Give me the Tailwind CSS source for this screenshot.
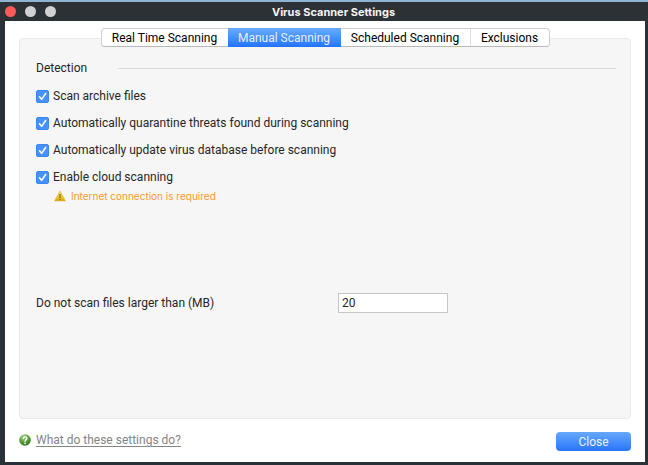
<!DOCTYPE html>
<html lang="en">
<head>
<meta charset="utf-8">
<meta name="viewport" content="width=device-width, initial-scale=1">
<title>Virus Scanner Settings</title>
<script src="https://cdn.jsdelivr.net/npm/@tailwindcss/browser@4"></script>
</head>
<body class="flex min-h-screen flex-col border-t-2 border-[#8fb3d0] bg-[#2b3237] font-['Roboto','Liberation_Sans',sans-serif] text-[12px] leading-4 text-[#262626]">
  <header class="flex h-[19px] shrink-0 items-center rounded-t bg-[#2c3136] pl-[5px]">
    <div class="flex flex-1 gap-[9px]">
      <button type="button" aria-label="Close window" class="size-[11px] rounded-full bg-[#fc5b57]"></button>
      <button type="button" aria-label="Minimize window" class="size-[11px] rounded-full bg-[#d0d1d2]"></button>
      <button type="button" aria-label="Zoom window" class="size-[11px] rounded-full bg-[#d0d1d2]"></button>
    </div>
    <h1 class="pl-[14px] font-['Inter','Liberation_Sans',sans-serif] text-[11px] font-bold text-[#f4f4f4]">Virus Scanner Settings</h1>
    <div class="flex-1"></div>
  </header>

  <main class="mr-[3px] mb-[3px] ml-[5px] flex flex-1 flex-col bg-white px-[14px] pt-[7px] pb-[11px]">
    <nav class="z-10 -mb-[9px] flex h-[19px] self-center rounded border border-[#cfcfcf] border-b-[#b9b9b9] bg-white text-black">
      <button type="button" class="w-[126px] rounded-l">Real Time Scanning</button>
      <button type="button" aria-current="page" class="-my-px w-[113px] bg-linear-to-b from-[#6aacfa] to-[#2173fc] text-[#e4f0ff]">Manual Scanning</button>
      <button type="button" class="w-[130px] border-r border-[#dedede]">Scheduled Scanning</button>
      <button type="button" class="w-[78px] rounded-r">Exclusions</button>
    </nav>

    <section class="flex-1 rounded-sm border border-[#e9e9e9] bg-[#f6f6f6] pt-[21px] pr-[14px] pb-4 pl-4">
      <div class="flex items-center">
        <h2 class="w-[82px]">Detection</h2>
        <div class="h-px flex-1 bg-[#dcdcdc]"></div>
      </div>

      <div class="mt-3 flex flex-col items-start gap-[11px]">
        <label class="flex items-center gap-1">
          <span class="grid size-[13px]">
            <input type="checkbox" checked class="peer col-start-1 row-start-1 size-[13px] appearance-none rounded-[2px] border border-[#b5b5b5] bg-white checked:border-[#3c86f2] checked:bg-[#4791f8]">
            <svg viewBox="0 0 12 12" class="pointer-events-none invisible col-start-1 row-start-1 size-[13px] peer-checked:visible" fill="none" stroke="#fff" stroke-width="1.4" stroke-linecap="round" stroke-linejoin="round"><path d="M3.2 6.3 5.2 8.6 8.9 3.2"/></svg>
          </span>
          Scan archive files
        </label>
        <label class="flex items-center gap-1">
          <span class="grid size-[13px]">
            <input type="checkbox" checked class="peer col-start-1 row-start-1 size-[13px] appearance-none rounded-[2px] border border-[#b5b5b5] bg-white checked:border-[#3c86f2] checked:bg-[#4791f8]">
            <svg viewBox="0 0 12 12" class="pointer-events-none invisible col-start-1 row-start-1 size-[13px] peer-checked:visible" fill="none" stroke="#fff" stroke-width="1.4" stroke-linecap="round" stroke-linejoin="round"><path d="M3.2 6.3 5.2 8.6 8.9 3.2"/></svg>
          </span>
          Automatically quarantine threats found during scanning
        </label>
        <label class="flex items-center gap-1">
          <span class="grid size-[13px]">
            <input type="checkbox" checked class="peer col-start-1 row-start-1 size-[13px] appearance-none rounded-[2px] border border-[#b5b5b5] bg-white checked:border-[#3c86f2] checked:bg-[#4791f8]">
            <svg viewBox="0 0 12 12" class="pointer-events-none invisible col-start-1 row-start-1 size-[13px] peer-checked:visible" fill="none" stroke="#fff" stroke-width="1.4" stroke-linecap="round" stroke-linejoin="round"><path d="M3.2 6.3 5.2 8.6 8.9 3.2"/></svg>
          </span>
          Automatically update virus database before scanning
        </label>
        <label class="flex items-center gap-1">
          <span class="grid size-[13px]">
            <input type="checkbox" checked class="peer col-start-1 row-start-1 size-[13px] appearance-none rounded-[2px] border border-[#b5b5b5] bg-white checked:border-[#3c86f2] checked:bg-[#4791f8]">
            <svg viewBox="0 0 12 12" class="pointer-events-none invisible col-start-1 row-start-1 size-[13px] peer-checked:visible" fill="none" stroke="#fff" stroke-width="1.4" stroke-linecap="round" stroke-linejoin="round"><path d="M3.2 6.3 5.2 8.6 8.9 3.2"/></svg>
          </span>
          Enable cloud scanning
        </label>
      </div>

      <p class="mt-[3px] flex items-center gap-[5px] pl-[18px] font-['Inter','Liberation_Sans',sans-serif] text-[10px] text-[#fb9a2e]">
        <svg viewBox="0 0 12 12" class="size-3" aria-hidden="true">
          <defs><linearGradient id="warn" x1="0" y1="0" x2="0" y2="1"><stop offset="0" stop-color="#f5e490"/><stop offset=".6" stop-color="#ecc52c"/><stop offset="1" stop-color="#d3a714"/></linearGradient></defs>
          <path d="M6 .8 11.5 11H.5Z" fill="url(#warn)" stroke="#dcb640" stroke-width=".6" stroke-linejoin="round"/>
          <path d="M6 4.4v3" stroke="#7a6420" stroke-width="1.1" stroke-linecap="round"/>
          <circle cx="6" cy="9.3" r=".65" fill="#7a6420"/>
        </svg>
        Internet connection is required
      </p>

      <div class="mt-[89px] flex items-center">
        <label for="max-size" class="w-[302px]">Do not scan files larger than (MB)</label>
        <input id="max-size" type="text" value="20" class="h-5 w-[110px] border border-[#c6c6c6] bg-white px-[3px]">
      </div>
    </section>

    <footer class="mt-[13px] flex items-start justify-between">
      <a href="#" class="flex items-center gap-[5px] text-[#858585]">
        <svg viewBox="0 0 12 12" class="size-3" aria-hidden="true">
          <defs><radialGradient id="help" cx=".4" cy=".25" r=".8"><stop offset="0" stop-color="#b5d79b"/><stop offset=".5" stop-color="#5aa337"/><stop offset="1" stop-color="#2c6f18"/></radialGradient></defs>
          <circle cx="6" cy="6" r="5.8" fill="url(#help)"/>
          <path d="M4.2 4.6C4.2 2.3 7.9 2.3 7.9 4.5 7.9 5.8 6.1 5.9 6.1 7.2" fill="none" stroke="#fff" stroke-width="1.4" stroke-linecap="round"/>
          <circle cx="6.1" cy="9.3" r=".9" fill="#fff"/>
        </svg>
        <span class="underline underline-offset-2">What do these settings do?</span>
      </a>
      <button type="button" class="h-[19px] w-[75px] rounded bg-linear-to-b from-[#65a8fb] to-[#2a74fb] text-[#e8f2ff]">Close</button>
    </footer>
  </main>
</body>
</html>
